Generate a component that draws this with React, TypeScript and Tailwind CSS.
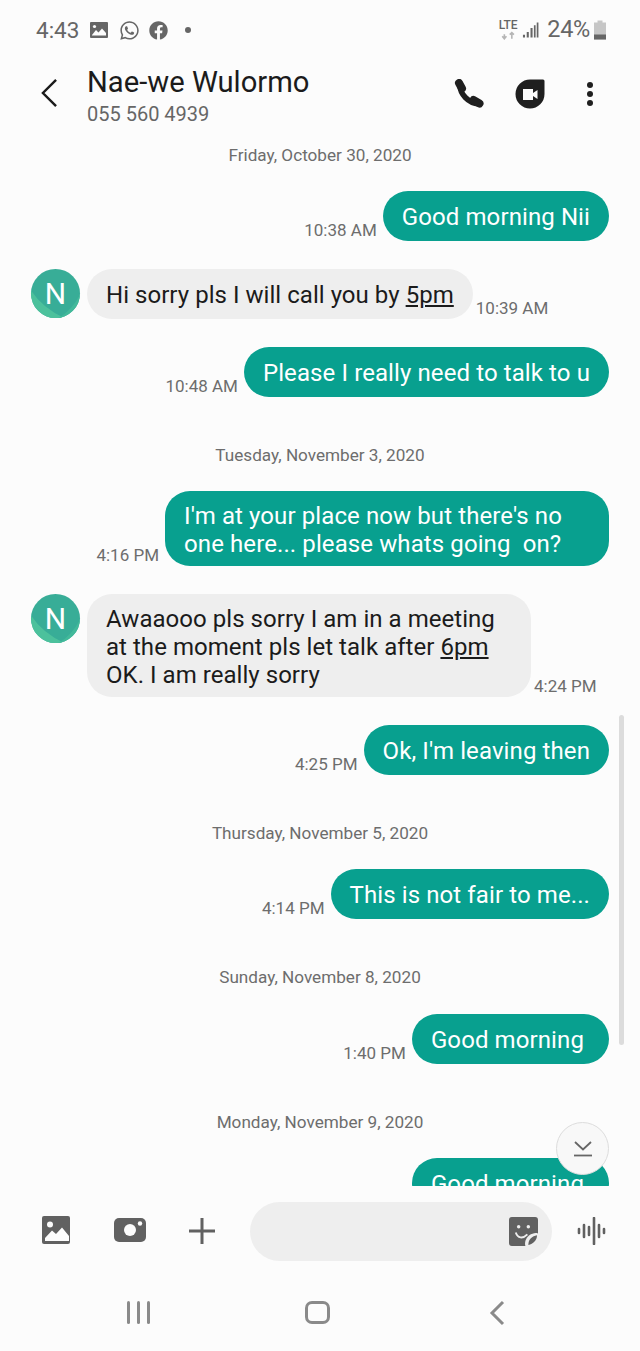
import { ReactNode } from 'react';
import { FaWhatsapp, FaFacebook } from 'react-icons/fa';

const DateLine = ({ children, first }: { children: ReactNode; first?: boolean }) => (
  <div className={`${first ? 'mt-0' : 'mt-[48px]'} mb-[26px] h-[20px] text-center text-[17.15px] leading-[20px] text-[#6d6d6d]`}>
    {children}
  </div>
);

const Sent = ({ time, className = '', children }: { time: string; className?: string; children: ReactNode }) => (
  <div className="flex items-end justify-end gap-[6px] pr-[31px]">
    <span className="mb-[1px] text-[17px] leading-[20px] text-[#6d6d6d]">{time}</span>
    <div className={`flex min-h-[50px] items-center rounded-[25px] bg-[#08a08f] px-[19px] pt-[10.5px] pb-[7.5px] text-[24px] leading-[28.25px] tracking-[0.1px] whitespace-pre text-white ${className}`}>
      <div>{children}</div>
    </div>
  </div>
);

const Avatar = () => (
  <div className="relative h-[49px] w-[49px] shrink-0 overflow-hidden rounded-full bg-[#38ad97]">
    <svg viewBox="0 0 50 50" className="absolute inset-0 h-full w-full">
      <path d="M0 22 Q12 40 34 50 L0 50 Z" fill="#4cc19c" />
      <path d="M28 50 Q42 42 50 26 L50 50 Z" fill="#42b99a" />
    </svg>
    <span className="absolute inset-0 flex items-center justify-center text-[30px] text-white">N</span>
  </div>
);

const Received = ({ time, className = '', children }: { time: string; className?: string; children: ReactNode }) => (
  <div className="flex items-start pl-[31px]">
    <Avatar />
    <div className="flex items-end">
      <div className={`ml-[7px] flex min-h-[50px] items-center rounded-[25px] bg-[#eeeeee] px-[19px] pt-[10.5px] pb-[7.5px] text-[24px] leading-[28.25px] tracking-[0.04px] whitespace-pre text-[#1b1b1b] ${className}`}>
        <div>{children}</div>
      </div>
      <span className="mb-[1px] ml-[3px] text-[17px] leading-[20px] text-[#6d6d6d]">{time}</span>
    </div>
  </div>
);

const StatusBar = () => (
  <div className="flex h-[60px] items-center pr-[33px] pl-[36px] text-[#666666]">
    <span className="text-[22.5px] leading-none">4:43</span>
    <svg viewBox="0 0 20 20" className="ml-[10px] h-[20px] w-[20px]">
      <rect x="1" y="2" width="18" height="16" rx="1" fill="#666666" />
      <circle cx="5.5" cy="6.5" r="1.6" fill="#fcfcfc" />
      <path d="M3 15 L7 10 L9.5 12.5 L13 8.5 L17 13 V15.5 H3 Z" fill="#fcfcfc" />
    </svg>
    <FaWhatsapp className="ml-[10px] h-[21px] w-[21px]" />
    <FaFacebook className="ml-[9px] h-[19px] w-[19px]" />
    <span className="ml-[17px] h-[6px] w-[6px] rounded-full bg-[#666666]" />
    <div className="ml-auto flex items-center">
      <div className="flex flex-col items-center">
        <span className="text-[12px] leading-[11px] font-medium tracking-[-0.2px] text-[#666666]">LTE</span>
        <svg viewBox="0 0 18 9" className="h-[9px] w-[15px]">
          <path d="M4 8.5 V3 M1.5 5.5 L4 8.5 L6.5 5.5" stroke="#b5b5b5" strokeWidth="1.9" fill="none" />
          <path d="M13 8.5 V1 M10.5 3.5 L13 1 L15.5 3.5" stroke="#b5b5b5" strokeWidth="1.9" fill="none" />
        </svg>
      </div>
      <svg viewBox="0 0 18 18" className="ml-[5px] h-[18px] w-[17px]">
        <path d="M1 14h2.2v3H1zM5 11h2.2v6H5zM9 7h2.2v10H9zM12.6 4h1.8v13h-1.8zM15.6 1h1.8v16h-1.8z" fill="#666666" />
      </svg>
      <span className="ml-[8px] text-[23.5px] leading-none tracking-[-0.3px]">24%</span>
      <svg viewBox="0 0 14 20" className="ml-[3px] h-[20px] w-[14px]">
        <path d="M4.5 0.5h5v2h3.5v17H1v-17h3.5z" fill="#c6c6c6" />
        <rect x="1" y="14.5" width="12" height="5" fill="#666666" />
      </svg>
    </div>
  </div>
);

const Header = () => (
  <div className="flex h-[76px] items-start">
    <svg viewBox="0 0 20 32" className="mt-[18px] ml-[40px] h-[30px] w-[19px]">
      <path d="M17 2 L3 16 L17 30" stroke="#1b1b1b" strokeWidth="2.6" fill="none" />
    </svg>
    <div className="ml-[28px] flex flex-col">
      <span className="text-[29.2px] leading-[44px] text-[#1b1b1b]">Nae-we Wulormo</span>
      <span className="text-[20px] leading-[21px] text-[#666666]">055 560 4939</span>
    </div>
    <div className="ml-auto flex items-center pt-[19px] pr-[47px]">
      <svg viewBox="0 0 30 30" className="h-[30px] w-[30px]">
        <path d="M6 6 C6 15 14 24 25 25" stroke="#1f1f1f" strokeWidth="5.5" fill="none" strokeLinecap="round" />
        <path d="M5 4 L8 9.5 M19.5 21 L25.5 24.5" stroke="#1f1f1f" strokeWidth="8" fill="none" strokeLinecap="round" />
      </svg>
      <svg viewBox="0 0 30 30" className="ml-[31px] h-[30px] w-[30px]">
        <path d="M15 .5 H28 a1.5 1.5 0 0 1 1.5 1.5 V15 A14.5 14.5 0 1 1 15 .5 Z" fill="#1f1f1f" />
        <path d="M8 10 h10 v4 l4.5 -3 v9 l-4.5 -3 v4 h-10 Z" fill="#fcfcfc" />
      </svg>
      <div className="ml-[42px] flex flex-col gap-[3px]">
        <span className="h-[6px] w-[6px] rounded-full bg-[#1f1f1f]" />
        <span className="h-[6px] w-[6px] rounded-full bg-[#1f1f1f]" />
        <span className="h-[6px] w-[6px] rounded-full bg-[#1f1f1f]" />
      </div>
    </div>
  </div>
);

const Messages = () => (
  <div className="relative h-[1050px] overflow-hidden pt-[9px]">
    <DateLine first>Friday, October 30, 2020</DateLine>
    <div className="flex flex-col gap-[28px]">
      <Sent time="10:38 AM">Good morning Nii</Sent>
      <Received time="10:39 AM">
        Hi sorry pls I will call you by <span className="underline underline-offset-2">5pm</span>
      </Received>
      <Sent time="10:48 AM">Please I really need to talk to u</Sent>
    </div>
    <DateLine>Tuesday, November 3, 2020</DateLine>
    <div className="flex flex-col gap-[28px]">
      <Sent time="4:16 PM" className="h-[75px] w-[444px]">{"I'm at your place now but there's no\none here... please whats going  on?"}</Sent>
      <Received time="4:24 PM" className="h-[103px] w-[444px]">
        {'Awaaooo pls sorry I am in a meeting\nat the moment pls let talk after '}
        <span className="underline underline-offset-2">6pm</span>
        {'\nOK. I am really sorry'}
      </Received>
      <Sent time="4:25 PM">Ok, I'm leaving then</Sent>
    </div>
    <DateLine>Thursday, November 5, 2020</DateLine>
    <Sent time="4:14 PM">This is not fair to me...</Sent>
    <DateLine>Sunday, November 8, 2020</DateLine>
    <div className="mt-[27px]">
      <Sent time="1:40 PM" className="pr-[25px]">Good morning</Sent>
    </div>
    <DateLine>Monday, November 9, 2020</DateLine>
    <Sent time="" className="pr-[25px]">Good morning</Sent>

    {/* scrollbar + jump to bottom */}
    <div className="absolute top-[579px] right-[16px] h-[330px] w-[5px] rounded-full bg-[#dcdcdc]" />
    <div className="absolute top-[986px] left-[556px] flex h-[53px] w-[53px] items-center justify-center rounded-full border border-[#dddddd] bg-[#f8f8f8]">
      <svg viewBox="0 0 20 16" className="h-[16px] w-[20px]">
        <path d="M2 1 L10 8.5 L18 1" stroke="#666666" strokeWidth="1.8" fill="none" />
        <path d="M1 14.5 H19" stroke="#666666" strokeWidth="1.8" />
      </svg>
    </div>
  </div>
);

const InputBar = () => (
  <div className="flex h-[91px] items-start pt-[16px]">
    <svg viewBox="0 0 28 28" className="mt-[14px] ml-[42px] h-[28px] w-[28px]">
      <rect width="28" height="28" rx="2" fill="#616161" />
      <circle cx="8" cy="8.5" r="3" fill="#fcfcfc" />
      <path d="M3 25 V22 L10 14.5 L14 18 L20 11.5 L27 20 V25 Z" fill="#fcfcfc" />
    </svg>
    <svg viewBox="0 0 32 24" className="mt-[16px] ml-[44px] h-[24px] w-[32px]">
      <rect width="32" height="24" rx="5" fill="#616161" />
      <circle cx="16" cy="12" r="6" fill="#fcfcfc" />
      <circle cx="26" cy="5.5" r="2.2" fill="#fcfcfc" />
    </svg>
    <svg viewBox="0 0 28 28" className="mt-[15px] ml-[42px] h-[28px] w-[28px]">
      <path d="M14 1 V27 M1 14 H27" stroke="#616161" strokeWidth="3" />
    </svg>
    <div className="ml-[34px] flex h-[59px] w-[302px] items-center justify-end rounded-full bg-[#eeeeee] pr-[14px]">
      <svg viewBox="0 0 30 30" className="h-[29px] w-[29px]">
        <path d="M3 0 H27 a3 3 0 0 1 3 3 V17 C27 16 24 17 21 19 C17 22 16 27 17 30 H3 a3 3 0 0 1 -3 -3 V3 a3 3 0 0 1 3 -3 Z" fill="#616161" />
        <circle cx="10" cy="10" r="1.8" fill="#eeeeee" />
        <circle cx="20" cy="10" r="1.8" fill="#eeeeee" />
        <path d="M7 16 C9 22 14 23 19 18" stroke="#eeeeee" strokeWidth="2" fill="none" />
        <path d="M20 29 C20 23 24 20 29 19 C29 24 25 28 20 29 Z" fill="#616161" />
      </svg>
    </div>
    <svg viewBox="0 0 30 28" className="mt-[15px] ml-[25px] h-[28px] w-[30px]">
      <path d="M2 12v4M7 8v12M12 10v8M17 1v26M22 8v12M27 12v4" stroke="#616161" strokeWidth="2.6" strokeLinecap="round" />
    </svg>
  </div>
);

const NavBar = () => (
  <div className="flex h-[74px] items-start pt-[21px]">
    <div className="ml-[127px] mt-[3px] flex gap-[7px]">
      <span className="h-[23px] w-[3px] rounded-full bg-[#8a8a8a]" />
      <span className="h-[23px] w-[3px] rounded-full bg-[#8a8a8a]" />
      <span className="h-[23px] w-[3px] rounded-full bg-[#8a8a8a]" />
    </div>
    <div className="mt-[3px] ml-[155px] h-[23px] w-[25px] rounded-[7px] border-[3px] border-[#8a8a8a]" />
    <svg viewBox="0 0 16 26" className="mt-[2px] ml-[159px] h-[26px] w-[16px]">
      <path d="M14 2 L3 13 L14 24" stroke="#8a8a8a" strokeWidth="3" fill="none" />
    </svg>
  </div>
);

export default function App() {
  return (
    <div className="h-[1351px] w-[640px] overflow-hidden bg-[#fcfcfc] font-['Roboto',sans-serif]">
      <StatusBar />
      <Header />
      <Messages />
      <InputBar />
      <NavBar />
    </div>
  );
}
